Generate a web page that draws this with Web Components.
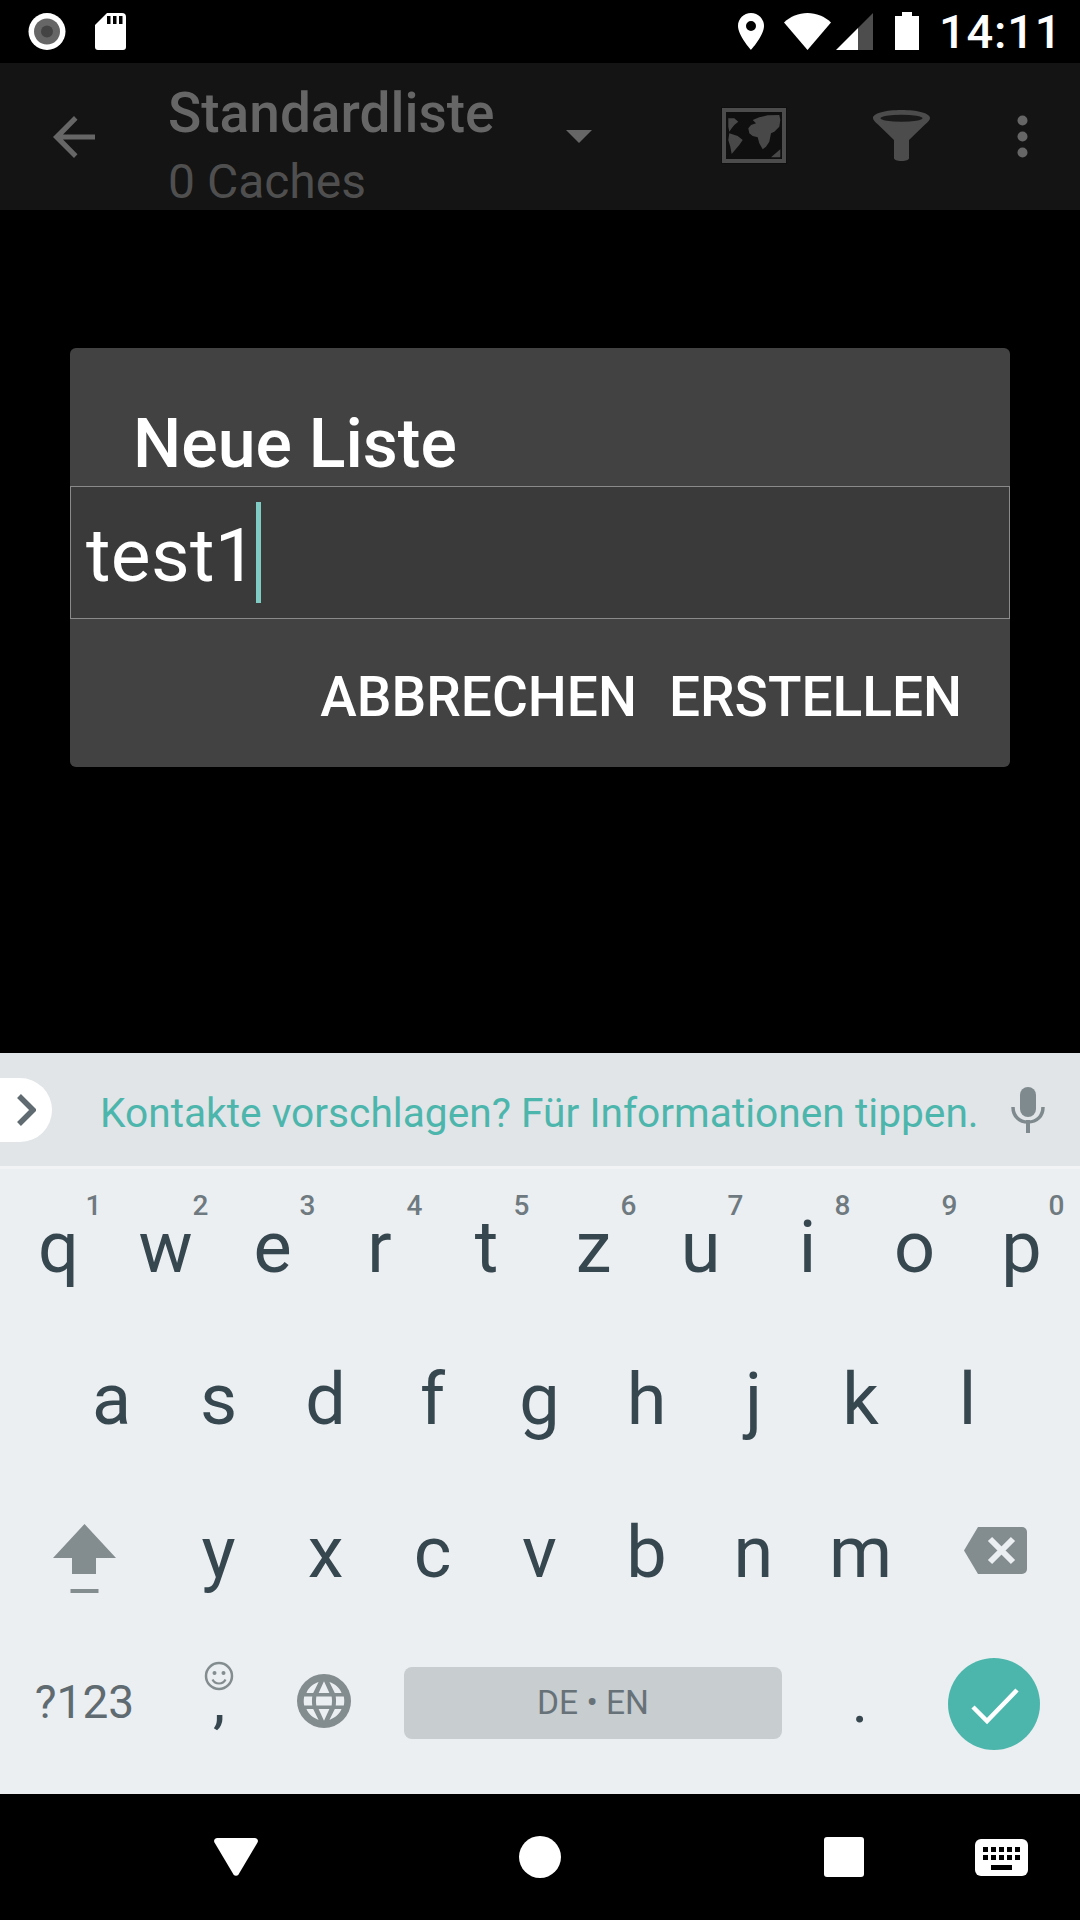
<!DOCTYPE html>
<html lang="de">
<head>
<meta charset="utf-8">
<title>Neue Liste</title>
<style>
  html, body { margin: 0; padding: 0; background: #000; }
  body { width: 1080px; height: 1920px; overflow: hidden; font-family: Roboto, "Liberation Sans", sans-serif; }
</style>
</head>
<body>
<app-screen>
  <status-bar></status-bar>
  <list-toolbar title="Standardliste" subtitle="0 Caches"></list-toolbar>
  <name-dialog heading="Neue Liste" value="test1"></name-dialog>
  <soft-keyboard></soft-keyboard>
  <nav-bar></nav-bar>
</app-screen>

<script>
class AppScreen extends HTMLElement {
  constructor() {
    super();
    this.attachShadow({ mode: 'open' });
    this.shadowRoot.innerHTML = `
      <style>
        :host { display: flex; flex-direction: column; width: 1080px; height: 1920px; background: #000; }
      </style>
      <slot></slot>
    `;
  }
}
customElements.define('app-screen', AppScreen);

class StatusBar extends HTMLElement {
  constructor() {
    super();
    this.attachShadow({ mode: 'open' });
    this.shadowRoot.innerHTML = `
      <style>
        :host { display: flex; align-items: flex-start; box-sizing: border-box; height: 63px; padding: 13px 0 0 28px; background: #000; color: #fff; }
        svg { display: block; flex: none; }
        .rec { margin-right: 29px; }
        .spacer { flex: 1; }
        .pin { margin-right: 20px; }
        .wifi { margin-right: 5px; }
        .signal { margin-right: 22px; }
        .battery { margin-top: -1px; margin-right: 20px; }
        .time { font-size: 47px; font-weight: 500; line-height: 37px; width: 141px; letter-spacing: 0.8px; }
      </style>
      <svg class="rec" width="38" height="37" viewBox="0 0 38 37">
        <circle cx="19" cy="18.5" r="18.5" fill="#fff"/>
        <circle cx="19" cy="18.5" r="13" fill="#666"/>
        <circle cx="19" cy="18.5" r="6" fill="#444"/>
      </svg>
      <svg width="31" height="37" viewBox="0 0 31 37">
        <path d="M12 0H27a4 4 0 0 1 4 4V34a3 3 0 0 1-3 3H3a3 3 0 0 1-3-3V12Z" fill="#fff"/>
        <path d="M12 3h3.5v8H12zM18 3h3.5v8H18zM24 3h3.5v8H24z" fill="#000"/>
      </svg>
      <div class="spacer"></div>
      <svg class="pin" width="26" height="37" viewBox="0 0 26 37">
        <path fill-rule="evenodd" d="M13 0C5.800 0 0 5.800 0 13c0 9.500 13 24 13 24s13-14.500 13-24C26 5.800 20.200 0 13 0Zm0 18a5 5 0 1 1 0-10 5 5 0 0 1 0 10Z" fill="#fff"/>
      </svg>
      <svg class="wifi" width="47" height="37" viewBox="0 0 47 37">
        <path d="M23.500 37 0 9.500C6.500 3.500 14.500 0 23.500 0S40.500 3.500 47 9.500Z" fill="#fff"/>
      </svg>
      <svg class="signal" width="37" height="37" viewBox="0 0 37 37">
        <path d="M22 37H0L22 15Z" fill="#fff"/>
        <path d="M22 37V15L37 0V37Z" fill="#4d4d4d"/>
      </svg>
      <svg class="battery" width="24" height="38" viewBox="0 0 24 38">
        <path d="M7 0h10v4h7v34H0V4h7Z" fill="#fff"/>
      </svg>
      <div class="time">14:11</div>
    `;
  }
}
customElements.define('status-bar', StatusBar);

class ListToolbar extends HTMLElement {
  constructor() {
    super();
    this.attachShadow({ mode: 'open' });
    this.shadowRoot.innerHTML = `
      <style>
        :host { display: flex; align-items: flex-start; box-sizing: border-box; height: 147px; background: #141414; color: #666; }
        svg { display: block; flex: none; }
        .back { margin: 53px 0 0 53px; }
        .titles { margin-left: 73px; width: 398px; flex: none; }
        .title { font-size: 55px; font-weight: 500; line-height: 60px; margin-top: 20px; white-space: nowrap; }
        .sub { font-size: 48px; line-height: 60px; margin-top: 9px; color: #4f4f4f; white-space: nowrap; }
        .caret { margin: 67px 0 0 0; }
        .map { margin: 44px 0 0 129px; }
        .funnel { margin: 47px 0 0 86px; filter: blur(0.6px); }
        .more { margin: 52px 0 0 87px; }
      </style>
      <svg class="back" width="42" height="42" viewBox="0 0 42 42">
        <path d="M42 18.500H10L24.500 3.700 21 0 0 21l21 21 3.500-3.700L10 23.500h32Z" fill="#666"/>
      </svg>
      <div class="titles">
        <div class="title"></div>
        <div class="sub"></div>
      </div>
      <svg class="caret" width="26" height="13" viewBox="0 0 26 13"><path d="M0 0h26L13 13Z" fill="#666"/></svg>
      <svg class="map" width="66" height="57" viewBox="0 0 66 57">
        <rect width="66" height="57" fill="#0f0f0f"/>
        <rect x="1" y="1" width="64" height="55" fill="#4c4c4c"/>
        <rect x="5" y="5" width="56" height="47" fill="#0f0f0f"/>
        <g fill="#484848">
          <path d="M27.300 21.300 30 18l5-1.700L31.700 13l6.600-2.700 8.400-2L58.300 8l1 5-1 6.700-5 5-3.300 1.600-1.700 8.400-3.300 5-3.300 2.600-3.400-6-1.600-6-5-1.300-3.400-2.700Z"/>
          <path d="M7.300 11.300h6l4 3.400-4 3.300-2.600 3.300-2.400 3.400-1-5Z"/>
          <path d="m8.300 26.300 8.400 2.700 5 4-3.400 5-4.300 5-3.300 4-1.400-7.300-2-6.700Z"/>
          <path d="M59.300 42.300v8H50Z"/>
        </g>
      </svg>
      <svg class="funnel" width="57" height="51" viewBox="0 0 57 51">
        <path d="M0 8C0 3 13 0 28.500 0S57 3 57 8c0 2-2 4-5 6.500L36 30v18c0 2-3 3-7.500 3S21 50 21 48V30L5 14.500C2 12 0 10 0 8Z" fill="#4c4c4c"/>
        <ellipse cx="28.500" cy="8.300" rx="21" ry="3.500" fill="#1a1a1a"/>
      </svg>
      <svg class="more" width="11" height="43" viewBox="0 0 11 43">
        <circle cx="5.500" cy="5.500" r="5" fill="#666"/>
        <circle cx="5.500" cy="21.500" r="5" fill="#666"/>
        <circle cx="5.500" cy="37.500" r="5" fill="#666"/>
      </svg>
    `;
  }

  connectedCallback() {
    this.shadowRoot.querySelector('.title').textContent = this.getAttribute('title');
    this.shadowRoot.querySelector('.sub').textContent = this.getAttribute('subtitle');
  }
}
customElements.define('list-toolbar', ListToolbar);

class NameDialog extends HTMLElement {
  constructor() {
    super();
    this.attachShadow({ mode: 'open' });
    this.shadowRoot.innerHTML = `
      <style>
        :host { display: block; box-sizing: border-box; width: 940px; height: 419px; margin: 138px 0 0 70px; background: #424242; border-radius: 6px; color: #fff; overflow: hidden; }
        .heading { height: 138px; box-sizing: border-box; padding: 56px 0 0 63px; font-size: 68px; font-weight: 500; line-height: 80px; white-space: nowrap; }
        .field { display: flex; align-items: flex-start; box-sizing: border-box; height: 133px; background: #3a3a3a; border: 1px solid #8a8a8a; padding: 18px 0 0 15px; }
        .value { font-size: 75px; line-height: 100px; letter-spacing: 0.3px; white-space: nowrap; }
        .cursor { flex: none; width: 5px; height: 101px; background: #80cbc4; margin: -3px 0 0 -1px; }
        .actions { display: flex; justify-content: flex-end; gap: 32px; padding: 46px 48px 0 0; font-size: 55px; font-weight: 500; line-height: 64px; }
      </style>
      <div class="heading"></div>
      <div class="field"><span class="value"></span><span class="cursor"></span></div>
      <div class="actions"><span>ABBRECHEN</span><span>ERSTELLEN</span></div>
    `;
  }

  connectedCallback() {
    this.shadowRoot.querySelector('.heading').textContent = this.getAttribute('heading');
    this.shadowRoot.querySelector('.value').textContent = this.getAttribute('value');
  }
}
customElements.define('name-dialog', NameDialog);

class KbKey extends HTMLElement {
  constructor() {
    super();
    this.attachShadow({ mode: 'open' });
    this.shadowRoot.innerHTML = `
      <style>
        :host { display: block; position: relative; text-align: center; color: #37474f; font-size: 72px; line-height: 84px; }
        .hint { position: absolute; top: -14px; right: 10.5px; font-size: 28px; font-weight: 500; line-height: 28px; color: #6f7a80; }
      </style>
      <slot></slot><span class="hint"></span>
    `;
  }

  connectedCallback() {
    const hint = this.getAttribute('hint');
    const el = this.shadowRoot.querySelector('.hint');
    if (hint) {
      el.textContent = hint;
    } else {
      el.remove();
    }
  }
}
customElements.define('kb-key', KbKey);

class SoftKeyboard extends HTMLElement {
  constructor() {
    super();
    this.attachShadow({ mode: 'open' });
    this.shadowRoot.innerHTML = `
      <style>
        :host { display: block; margin-top: 286px; background: #ebeff2; height: 741px; }
        svg { display: block; }
        .suggest { display: flex; align-items: center; box-sizing: border-box; height: 116px; background: #e1e5e8; border-bottom: 3px solid #f1f3f5; }
        .pill { display: flex; align-items: center; justify-content: flex-end; box-sizing: border-box; width: 52px; height: 64px; padding-right: 16px; margin-top: 1px; background: #fff; border-radius: 0 32px 32px 0; }
        .hint { margin: 6px 0 0 48px; font-size: 40.7px; color: #4db6ac; white-space: nowrap; flex: 1; line-height: 50px; }
        .mic { margin-right: 35px; }
        .row { display: grid; grid-template-columns: repeat(10, 107px); padding-left: 5px; box-sizing: border-box; }
        .r1 { height: 153px; padding-top: 37px; }
        .r2 { height: 152px; padding-top: 36px; padding-left: 58px; grid-template-columns: repeat(9, 107px); }
        .r3 { height: 151px; padding-top: 37px; padding-left: 0; grid-template-columns: 165px repeat(7, 107px) 166px; }
        .r4 { display: flex; align-items: flex-start; padding: 42px 0 0; height: 170px; }
        .center { display: flex; justify-content: center; }
        .shift { margin: 13px 0 0 3px; }
        .del { margin: 16px 4px 0 0; }
        .sym { flex: none; width: 169px; text-align: center; font-size: 46px; line-height: 54px; color: #5f6b71; margin-top: 8px; }
        .comma { flex: none; width: 100px; display: flex; flex-direction: column; align-items: center; font-size: 62px; color: #37474f; line-height: 84px; }
        .comma svg { margin-top: -6px; }
        .comma span { margin-top: -32px; }
        .globe { flex: none; margin: 7px 29px 0 28px; }
        .space { flex: none; box-sizing: border-box; width: 378px; height: 72px; margin-left: 24px; background: #c8cdd0; border-radius: 8px; text-align: center; font-size: 33.5px; line-height: 72px; color: #677278; }
        .period { flex: none; width: 156px; text-align: center; font-size: 62px; line-height: 84px; color: #37474f; margin-top: -8px; }
        .enter { flex: none; margin: -9px 0 0 10px; }
      </style>
      <div class="suggest">
        <div class="pill"><svg width="20" height="32" viewBox="0 0 20 32"><path d="M3 2 17 16 3 30" fill="none" stroke="#5f6b71" stroke-width="5.500"/></svg></div>
        <div class="hint">Kontakte vorschlagen? Für Informationen tippen.</div>
        <svg class="mic" width="34" height="46" viewBox="0 0 34 46">
          <rect x="9" y="0" width="16" height="30" rx="8" fill="#7f8a8e"/>
          <path d="M2 20c0 9 6 15 15 15s15-6 15-15" fill="none" stroke="#7f8a8e" stroke-width="3.500"/>
          <rect x="15" y="33" width="4" height="13" fill="#7f8a8e"/>
        </svg>
      </div>
      <div class="row r1">
        <kb-key hint="1">q</kb-key><kb-key hint="2">w</kb-key><kb-key hint="3">e</kb-key><kb-key hint="4">r</kb-key><kb-key hint="5">t</kb-key>
        <kb-key hint="6">z</kb-key><kb-key hint="7">u</kb-key><kb-key hint="8">i</kb-key><kb-key hint="9">o</kb-key><kb-key hint="0">p</kb-key>
      </div>
      <div class="row r2">
        <kb-key>a</kb-key><kb-key>s</kb-key><kb-key>d</kb-key><kb-key>f</kb-key><kb-key>g</kb-key><kb-key>h</kb-key><kb-key>j</kb-key><kb-key>k</kb-key><kb-key>l</kb-key>
      </div>
      <div class="row r3">
        <div class="center"><svg class="shift" width="63" height="69" viewBox="0 0 63 69">
          <path d="M31.500 0 63 34H43V50H19V34H0Z" fill="#838c8f"/>
          <rect x="17.500" y="65" width="28" height="4" fill="#838c8f"/>
        </svg></div>
        <kb-key>y</kb-key><kb-key>x</kb-key><kb-key>c</kb-key><kb-key>v</kb-key><kb-key>b</kb-key><kb-key>n</kb-key><kb-key>m</kb-key>
        <div class="center"><svg class="del" width="63" height="47" viewBox="0 0 63 47">
          <path d="M14 0H58a5 5 0 0 1 5 5V42a5 5 0 0 1-5 5H14L0 23.500Z" fill="#838c8f"/>
          <path d="M26 12 49 35M49 12 26 35" stroke="#ebeff2" stroke-width="6" fill="none"/>
        </svg></div>
      </div>
      <div class="row r4">
        <div class="sym">?123</div>
        <div class="comma">
          <svg width="30" height="30" viewBox="0 0 30 30">
            <circle cx="15" cy="15" r="13" fill="none" stroke="#838c8f" stroke-width="2.500"/>
            <circle cx="10.500" cy="12" r="2" fill="#838c8f"/><circle cx="19.500" cy="12" r="2" fill="#838c8f"/>
            <path d="M8.500 18.500c1.500 3 4 4 6.500 4s5-1 6.500-4" fill="none" stroke="#838c8f" stroke-width="2.200"/>
          </svg>
          <span>,</span>
        </div>
        <svg class="globe" width="54" height="54" viewBox="0 0 54 54">
          <circle cx="27" cy="27" r="27" fill="#838c8f"/>
          <path transform="translate(27 27) scale(.9) translate(-27 -27)" fill="#ebeff2" d="M21 6 15 18H7.500C10 12 15 8 21 6ZM33 6c6 2 11 6 13.500 12H39ZM27 5l6 13H21ZM5 22h9c-.5 3-.5 7 0 10H5c-.7-3-.7-7 0-10ZM18.500 22h17c.5 3 .5 7 0 10h-17c-.5-3-.5-7 0-10ZM40 22h9c.7 3 .7 7 0 10h-9c.5-3 .5-7 0-10ZM7.500 36H15l6 12C15 46 10 42 7.500 36ZM21 36h12l-6 13ZM39 36h7.500C44 42 39 46 33 48Z"/>
        </svg>
        <div class="space">DE • EN</div>
        <div class="period">.</div>
        <svg class="enter" width="92" height="92" viewBox="0 0 92 92">
          <circle cx="46" cy="46" r="46" fill="#4db6ac"/>
          <path d="M25 49 39 63 69 32" fill="none" stroke="#fff" stroke-width="4.500"/>
        </svg>
      </div>
    `;
  }
}
customElements.define('soft-keyboard', SoftKeyboard);

class NavBar extends HTMLElement {
  constructor() {
    super();
    this.attachShadow({ mode: 'open' });
    this.shadowRoot.innerHTML = `
      <style>
        :host { display: flex; align-items: center; box-sizing: border-box; height: 126px; padding: 0 0 0 214px; background: #000; }
        svg { display: block; flex: none; }
        .home { margin-left: 261px; }
        .recent { margin-left: 263px; }
        .ime { margin-left: 111px; }
      </style>
      <svg width="44" height="38" viewBox="0 0 44 38"><path d="M3 0H41a3 3 0 0 1 2.500 4.500L24.500 36.500a3 3 0 0 1-5 0L.5 4.500A3 3 0 0 1 3 0Z" fill="#fff"/></svg>
      <svg class="home" width="42" height="42" viewBox="0 0 42 42"><circle cx="21" cy="21" r="21" fill="#fff"/></svg>
      <svg class="recent" width="40" height="40" viewBox="0 0 40 40"><rect width="40" height="40" rx="3" fill="#fff"/></svg>
      <svg class="ime" width="53" height="37" viewBox="0 0 53 37">
        <rect width="53" height="37" rx="6" fill="#fff"/>
        <path fill="#000" d="M8 8h5v5H8zM16 8h5v5h-5zM24 8h5v5h-5zM32 8h5v5h-5zM40 8h5v5h-5zM8 16h5v5H8zM16 16h5v5h-5zM24 16h5v5h-5zM32 16h5v5h-5zM40 16h5v5h-5zM16 26h21v5H16z"/>
      </svg>
    `;
  }
}
customElements.define('nav-bar', NavBar);
</script>
</body>
</html>
